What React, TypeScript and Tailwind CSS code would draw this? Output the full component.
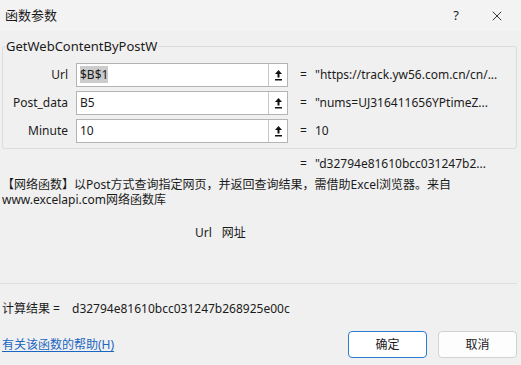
import { X } from 'lucide-react'

const ArrowBtn = () => (
  <div className="flex h-full w-[19px] items-center justify-center border-l border-[#c8c8c8] bg-white">
    <svg width="9" height="12" viewBox="0 0 9 12">
      <path d="M4.5 1 L8 5 L5.5 5 L5.5 8.5 L3.5 8.5 L3.5 5 L1 5 Z" fill="#111" />
      <rect x="1" y="10" width="7" height="1.5" fill="#111" />
    </svg>
  </div>
)

interface Arg {
  label: string
  value: string
  result: string
  selected?: boolean
}

const args: Arg[] = [
  { label: 'Url', value: '$B$1', result: '"https://track.yw56.com.cn/cn/...', selected: true },
  { label: 'Post_data', value: 'B5', result: '"nums=UJ316411656YPtimeZ...' },
  { label: 'Minute', value: '10', result: '10' },
]

const ArgRow = ({ arg }: { arg: Arg }) => (
  <div className="flex h-[24px] items-center">
    <div className="w-[63px] pr-[2px] text-right">{arg.label}</div>
    <div className="ml-[6px] flex h-full w-[212px] items-center border border-[#b4b4b4] bg-white">
      <div className="flex-1 pl-[3px]">
        <span className={arg.selected ? 'bg-[#cccccc]' : ''}>{arg.value}</span>
      </div>
      <ArrowBtn />
    </div>
    <div className="ml-[12px] w-[15px]">=</div>
    <div className="whitespace-nowrap">{arg.result}</div>
  </div>
)

export default function App() {
  return (
    <div
      className="flex h-[365px] w-[521px] flex-col overflow-hidden bg-[#f0f0f0] text-[12px] text-[#1b1b1b]"
      style={{ fontFamily: '"Noto Sans", "Noto Sans CJK SC", sans-serif' }}
    >
      {/* title bar */}
      <div className="flex h-[31px] shrink-0 items-center bg-[#f3f3f3] pl-[5px]">
        <span className="text-[13px]">函数参数</span>
        <span className="ml-auto mr-[30px] text-[13px]">?</span>
        <X size={16} strokeWidth={1.3} className="mr-[16px]" />
      </div>

      {/* argument group */}
      <fieldset className="mx-[2px] mr-[4px] mt-[7px] rounded-[3px] border border-[#dcdcdc] pb-[5px] pl-[4px]">
        <legend className="-ml-[2px] px-[1px] text-[13px] leading-[16px]">GetWebContentByPostW</legend>
        <div className="mt-[9px] flex flex-col gap-[4px]">
          {args.map((a) => (
            <ArgRow key={a.label} arg={a} />
          ))}
        </div>
      </fieldset>

      <div className="mt-[7px] flex h-[16px] items-center pl-[300px]">
        <span className="w-[15px]">=</span>
        <span>"d32794e81610bcc031247b2...</span>
      </div>

      <div className="mt-[5px] flex flex-col pl-[2px]">
        <div className="h-[15px] leading-[15px]">【网络函数】以Post方式查询指定网页，并返回查询结果，需借助Excel浏览器。来自</div>
        <div className="h-[15px] leading-[15px]">www.excelapi.com网络函数库</div>
      </div>

      <div className="mt-[17px] flex pl-[195px]">
        <span>Url</span>
        <span className="ml-[10px]">网址</span>
      </div>

      <div className="mt-[41px] mr-[4px] border-t border-[#dedede]" />

      <div className="mt-[16px] flex pl-[2px]">
        <span>计算结果 =</span>
        <span className="ml-[12px]">d32794e81610bcc031247b268925e00c</span>
      </div>

      <div className="mt-[13px] flex items-center">
        <a className="pl-[2px] text-[#1a66c2] underline underline-offset-2">有关该函数的帮助(H)</a>
        <button className="ml-auto h-[27px] w-[79px] rounded-[4px] border border-[#2a7bd1] bg-white text-[12px]">
          确定
        </button>
        <button className="ml-[11px] mr-[4px] h-[27px] w-[79px] rounded-[4px] border border-[#d2d2d2] bg-[#fdfdfd] text-[12px]">
          取消
        </button>
      </div>
    </div>
  )
}
